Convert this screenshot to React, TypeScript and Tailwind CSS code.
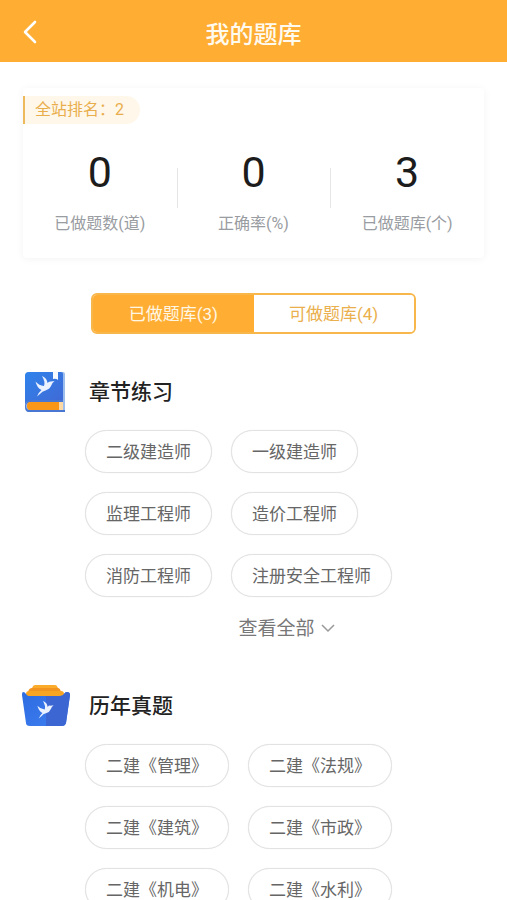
interface Stat {
  label: string;
  value: number;
}

interface SectionProps {
  title: string;
  icon: React.ReactNode;
  items: string[];
  children?: React.ReactNode;
}

const stats: Stat[] = [
  { label: '已做题数(道)', value: 0 },
  { label: '正确率(%)', value: 0 },
  { label: '已做题库(个)', value: 3 },
];

const chapters = ['二级建造师', '一级建造师', '监理工程师', '造价工程师', '消防工程师', '注册安全工程师'];

const pastPapers = ['二建《管理》', '二建《法规》', '二建《建筑》', '二建《市政》', '二建《机电》', '二建《水利》'];

// Bird mark shared by both section icons
function Bird() {
  return (
    <path
      d="M7 0Q12 2 12.500 7Q14 5 16 5.500L19.500 5Q17 7 16.500 9Q15 13 10.500 14.500Q7 15.500 5.500 17.500L2 20.500Q3.500 16.500 6.500 14Q2 12 0.500 5.500Q4 9.500 9 10Q10.500 6 7 0Z"
      fill="#eaf2ff"
    />
  );
}

function BookIcon() {
  return (
    <svg width="50" height="44" viewBox="0 0 50 44" aria-hidden="true">
      <defs>
        <linearGradient id="book-cover" x1="0" y1="0" x2="1" y2="1">
          <stop offset="0" stopColor="#2f83ec" />
          <stop offset="1" stopColor="#4168d4" />
        </linearGradient>
      </defs>
      <path d="M9 2H43Q45 2 45 4V42H9Q5 42 5 37V6Q5 2 9 2Z" fill="#9dbdec" />
      <path d="M9 2H41Q43 2 43 4V31H10Q6 31 5 35V6Q5 2 9 2Z" fill="url(#book-cover)" />
      <path d="M33 1H38V10Q36 8 33 9Z" fill="#f6f9ff" />
      <path d="M10 30H43V32H10Q6 33 6 36Q6 40 10 40H45V42H9Q5 42 5 36Q6 31 10 30Z" fill="#4777d2" />
      <path d="M10 32H41V40H10Q7 40 7 36Q7 32 10 32Z" fill="#fb9718" />
      <path d="M39 32H43V40H39Z" fill="#ffd9a3" />
      <g transform="translate(15 6)">
        <Bird />
      </g>
    </svg>
  );
}

function FolderIcon() {
  return (
    <svg width="50" height="44" viewBox="0 0 50 44" aria-hidden="true">
      <defs>
        <linearGradient id="folder-front" x1="0" y1="0" x2="1" y2="1">
          <stop offset="0" stopColor="#2c6be0" />
          <stop offset="1" stopColor="#3f80f2" />
        </linearGradient>
      </defs>
      <path d="M15 1H35Q37 1 38 4H12Q13 1 15 1Z" fill="#fbab2c" />
      <path d="M12 4H38Q40 4 41 8H8Q9 4 12 4Z" fill="#f29420" />
      <path d="M9 7H41Q44 7 44 10V14H6V10Q6 7 9 7Z" fill="#f9a524" />
      <path d="M3 8Q5 8 6 10Q7 12 9 12H40Q43 12 44 10Q45 8 47 8Q50 8 50 11L46 39Q45 42 42 42H10Q6 42 6 39L2 11Q2 8 3 8Z" fill="url(#folder-front)" />
      <path d="M26 12H40Q43 12 44 10Q45 8 47 8Q50 8 50 11L46 39Q45 42 42 42H26Z" fill="#3c66d2" />
      <g transform="translate(17 17) scale(0.85)">
        <Bird />
      </g>
    </svg>
  );
}

function Section({ title, icon, items, children }: SectionProps) {
  return (
    <section className="px-5">
      <div className="flex items-center gap-[19px]">
        {icon}
        <h2 className="text-[21px] leading-11 font-medium text-[#222222]">{title}</h2>
      </div>
      <ul className="mt-4 ml-[65px] grid grid-cols-[max-content_max-content] gap-[19px]">
        {items.map((item) => (
          <li key={item}>
            <button
              type="button"
              className="h-[43px] rounded-full border border-[#e2e2e2] bg-white px-5 pt-0.5 text-[17px] text-[#666666] shadow-[0_0_1px_#e2e2e2]"
            >
              {item}
            </button>
          </li>
        ))}
      </ul>
      {children}
    </section>
  );
}

export default function App() {
  return (
    <div className="min-h-screen bg-white font-[Roboto,'Noto_Sans_CJK_SC',sans-serif]">
      {/* Header */}
      <header className="relative flex h-[62px] items-center justify-center bg-[#ffae33] pt-2">
        <button type="button" aria-label="返回" className="absolute top-4 left-3.5 flex size-8 items-center justify-center">
          <svg width="16" height="24" viewBox="0 0 16 24" fill="none" stroke="#fff" strokeWidth="2.6" strokeLinecap="round" strokeLinejoin="round">
            <path d="M13 2L3 12L13 22" />
          </svg>
        </button>
        <h1 className="text-2xl font-medium text-[#fffaf0]">我的题库</h1>
      </header>

      <main>
        {/* Stats */}
        <section className="mx-[23px] mt-[26px] rounded-sm bg-white pt-2 pb-[22px] shadow-[0_1px_8px_rgba(0,0,0,0.05)]">
          <p className="w-max rounded-r-full border-l-2 border-[#ecb95c] bg-[#fff7ea] pr-4 pl-2.5 text-base leading-7 text-[#e9ae4c]">
            全站排名：2
          </p>
          <dl className="mt-[26px] grid grid-cols-3">
            {stats.map((stat, i) => (
              <div key={stat.label} className="relative flex flex-col-reverse items-center gap-[18px]">
                <dt className="text-base leading-6 text-[#999ca1]">{stat.label}</dt>
                <dd className="text-[43px] leading-[44px] text-[#1c1c1c]">{stat.value}</dd>
                {i > 0 && <span className="absolute top-[18px] left-0 h-10 w-px bg-[#e6e6e6]" />}
              </div>
            ))}
          </dl>
        </section>

        {/* Tabs */}
        <div
          role="tablist"
          className="mx-auto mt-[35px] grid h-[41px] w-[64%] grid-cols-2 overflow-hidden rounded-md border-2 border-[#f8b74a] text-[17px]"
        >
          <button type="button" role="tab" aria-selected="true" className="bg-[#ffae33] pt-0.5 text-[#fff6e4]">
            已做题库(3)
          </button>
          <button type="button" role="tab" aria-selected="false" className="bg-white pt-0.5 text-[#eab04e]">
            可做题库(4)
          </button>
        </div>

        <div className="mt-9 flex flex-col gap-[41px]">
          <Section title="章节练习" icon={<BookIcon />} items={chapters}>
            <button type="button" className="mx-auto mt-[18px] flex items-center gap-1.5 pl-[66px] text-[19px] leading-7 text-[#777777]">
              查看全部
              <svg width="14" height="10" viewBox="0 0 14 10" fill="none" stroke="#999" strokeWidth="1.5">
                <path d="M1 1L7 7L13 1" />
              </svg>
            </button>
          </Section>
          <Section title="历年真题" icon={<FolderIcon />} items={pastPapers} />
        </div>
      </main>
    </div>
  );
}
